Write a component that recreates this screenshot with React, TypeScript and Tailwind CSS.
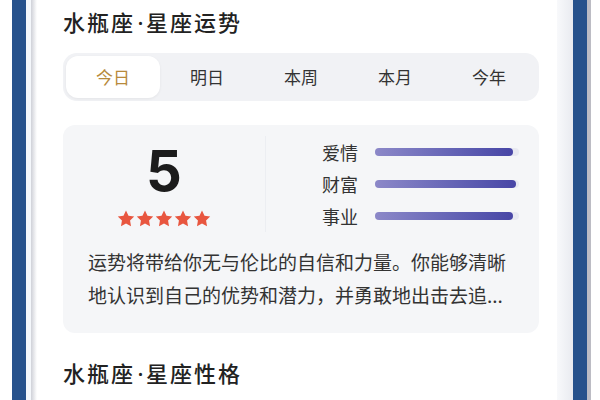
const tabs = ["今日", "明日", "本周", "本月", "今年"];

const fortunes = [
  { label: "爱情", pct: 96 },
  { label: "财富", pct: 98 },
  { label: "事业", pct: 96 },
];

function Star() {
  return (
    <svg width="18" height="17" viewBox="0 0 24 23">
      <path
        d="M12 0.8l3.4 7 7.7 1.1-5.6 5.4 1.3 7.6L12 18.3l-6.8 3.6 1.3-7.6L0.9 8.9l7.7-1.1z"
        fill="#e8563f"
      />
    </svg>
  );
}

function Title({ a, b }: { a: string; b: string }) {
  return (
    <>
      {a}
      <span className="inline-block w-[11px] text-center font-['Noto_Sans'] tracking-normal">·</span>
      {b}
    </>
  );
}

export default function App() {
  return (
    <div
      className="flex h-[400px] w-[600px] overflow-hidden bg-white"
      style={{ fontFamily: '"Noto Sans CJK SC", "Noto Sans", sans-serif' }}
    >
      {/* left frame edge */}
      <div className="w-[12px] bg-white" />
      <div className="w-[14px] bg-[#27528c]" />
      <div className="w-[5px] bg-[#f4f7fb]" />
      <div className="w-[6px] bg-gradient-to-r from-[#cfd1d8] to-white" />

      <div className="flex-1 pl-[26px] pr-[18px] pt-[6px]">
        <h1 className="h-[30px] text-[22px] font-medium leading-[30px] tracking-[2px] text-[#222]">
          <Title a="水瓶座" b="星座运势" />
        </h1>

        <div className="mt-[17px] flex h-[48px] rounded-[14px] bg-[#f1f2f5] p-[3px]">
          {tabs.map((t, i) => (
            <div
              key={t}
              className={
                i === 0
                  ? "flex flex-1 items-center justify-center rounded-[12px] bg-white text-[17px] text-[#b78a3c] shadow-[0_1px_3px_rgba(0,0,0,0.06)]"
                  : "flex flex-1 items-center justify-center text-[17px] text-[#333]"
              }
            >
              {t}
            </div>
          ))}
        </div>

        <div className="mt-[24px] h-[208px] rounded-[12px] bg-[#f5f6f8] pt-[11px]">
          <div className="flex h-[96px]">
            <div className="flex w-[202px] flex-col items-center pt-[7px]">
              <div
                className="text-[56px] font-bold leading-[56px] text-[#1c1c1c]"
                style={{ fontFamily: "Inter, Roboto, sans-serif" }}
              >
                5
              </div>
              <div className="mt-[11px] flex gap-[1px]">
                <Star />
                <Star />
                <Star />
                <Star />
                <Star />
              </div>
            </div>
            <div className="w-px bg-[#eceef2]" />
            <div className="flex flex-1 flex-col pl-[56px] pr-[20px]">
              {fortunes.map((f) => (
                <div key={f.label} className="flex h-[32px] items-center gap-[17px]">
                  <span className="text-[18px] text-[#333]">{f.label}</span>
                  <div className="h-[8px] flex-1 rounded-full bg-[#e8e9f1]">
                    <div
                      className="h-full rounded-full bg-gradient-to-r from-[#8c88c8] to-[#4846a6]"
                      style={{ width: `${f.pct}%` }}
                    />
                  </div>
                </div>
              ))}
            </div>
          </div>
          <p className="mt-[13px] px-[25px] text-[19px] leading-[33px] text-[#333]">
            运势将带给你无与伦比的自信和力量。你能够清晰地认识到自己的优势和潜力，并勇敢地出击去追...
          </p>
        </div>

        <h2 className="mt-[24px] h-[30px] text-[22px] font-medium leading-[30px] tracking-[2px] text-[#222]">
          <Title a="水瓶座" b="星座性格" />
        </h2>
      </div>

      {/* right frame edge */}
      <div className="w-[16px] bg-gradient-to-r from-[#f8f9fb] to-[#e9ebf0]" />
      <div className="w-[14px] bg-[#27528c]" />
      <div className="w-[4px] bg-[#bcbcc4]" />
      <div className="w-[9px] bg-white" />
    </div>
  );
}
